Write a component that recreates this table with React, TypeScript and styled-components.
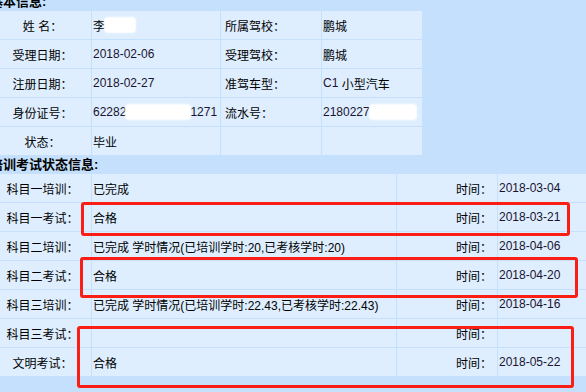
import { Fragment } from "react";
import styled, { createGlobalStyle } from "styled-components";

const GlobalStyle = createGlobalStyle`
  html {
    overflow: hidden;
    background: #c4e0fd;
  }
  body {
    margin: 0;
    padding: 0;
    background: #c4e0fd;
    font-family: "Liberation Sans", "Noto Sans CJK SC", sans-serif;
    font-size: 12px;
    color: #000;
  }
`;

const Page = styled.div`
  margin-top: -7px;
  margin-left: -10px;
  width: 596px;
  min-height: 399px;
  overflow: hidden;
`;

const SectionTitle = styled.div`
  height: 18px;
  line-height: 18px;
  font-size: 13px;
  font-weight: bold;
  background: #c4e0fd;
`;

const Grid = styled.div<{ $cols: string }>`
  position: relative;
  display: grid;
  grid-template-columns: ${(p) => p.$cols};
  grid-auto-rows: 28px;
  gap: 1px;
  margin-left: 3px;
  padding-bottom: 1px;
`;

const Cell = styled.div<{ $align?: "left" | "center" | "right"; $pad?: number }>`
  display: flex;
  align-items: center;
  justify-content: ${(p) =>
    p.$align === "center" ? "center" : p.$align === "right" ? "flex-end" : "flex-start"};
  padding: ${(p) =>
    p.$align === "right" ? `0 ${p.$pad ?? 5}px 0 0` : `0 0 0 ${p.$pad ?? 1}px`};
  background: #deeefe;
  white-space: nowrap;
  overflow: hidden;
`;

const Num = styled.span`
  color: #1b1330;
`;

const Redact = styled.span<{ $w: number }>`
  display: inline-block;
  width: ${(p) => p.$w}px;
  height: 14px;
  background: #fff;
  border-radius: 3px;
  box-shadow: 0 0 2px 1px #fff;
`;

const Mark = styled.div<{ $x: number; $y: number; $w: number; $h: number }>`
  position: absolute;
  left: ${(p) => p.$x}px;
  top: ${(p) => p.$y}px;
  width: ${(p) => p.$w}px;
  height: ${(p) => p.$h}px;
  box-sizing: border-box;
  border: 3px solid #fa1e14;
  border-radius: 3px;
  pointer-events: none;
  z-index: 2;
`;

const exams = [
  { label: "科目一培训：", value: "已完成", date: "2018-03-04" },
  { label: "科目一考试：", value: "合格", date: "2018-03-21" },
  {
    label: "科目二培训：",
    value: "已完成 学时情况(已培训学时:20,已考核学时:20)",
    date: "2018-04-06",
  },
  { label: "科目二考试：", value: "合格", date: "2018-04-20" },
  {
    label: "科目三培训：",
    value: "已完成 学时情况(已培训学时:22.43,已考核学时:22.43)",
    date: "2018-04-16",
  },
  { label: "科目三考试：", value: "", date: "" },
  { label: "文明考试：", value: "合格", date: "2018-05-22" },
];

export default function App() {
  return (
    <>
      <GlobalStyle />
      <Page>
        <SectionTitle>基本信息:</SectionTitle>
        <Grid $cols="98px 128px 100px 100px">
          <Cell $align="center">姓 名：</Cell>
          <Cell>
            李<Redact $w={30} />
          </Cell>
          <Cell $pad={4}>所属驾校：</Cell>
          <Cell>鹏城</Cell>

          <Cell $align="center">受理日期：</Cell>
          <Cell>
            <Num>2018-02-06</Num>
          </Cell>
          <Cell $pad={4}>受理驾校：</Cell>
          <Cell>鹏城</Cell>

          <Cell $align="center">注册日期：</Cell>
          <Cell>
            <Num>2018-02-27</Num>
          </Cell>
          <Cell $pad={4}>准驾车型：</Cell>
          <Cell>
            <Num>C1</Num>&nbsp;小型汽车
          </Cell>

          <Cell $align="center">身份证号：</Cell>
          <Cell>
            <Num>62282</Num>
            <Redact $w={64} />
            <Num>1271</Num>
          </Cell>
          <Cell $pad={4}>流水号：</Cell>
          <Cell>
            <Num>2180227</Num>
            <Redact $w={46} />
          </Cell>

          <Cell $align="center">状态：</Cell>
          <Cell>毕业</Cell>
          <Cell />
          <Cell />
        </Grid>

        <SectionTitle>培训考试状态信息:</SectionTitle>
        <Grid $cols="98px 304px 100px 110px">
          {exams.map((row) => (
            <Fragment key={row.label}>
              <Cell $align="center">{row.label}</Cell>
              <Cell>{row.value}</Cell>
              <Cell $align="right">时间：</Cell>
              <Cell>
                <Num>{row.date}</Num>
              </Cell>
            </Fragment>
          ))}
          <Mark $x={88} $y={28} $w={489} $h={34} />
          <Mark $x={87} $y={83} $w={498} $h={41} />
          <Mark $x={84} $y={152} $w={497} $h={62} />
        </Grid>
      </Page>
    </>
  );
}
